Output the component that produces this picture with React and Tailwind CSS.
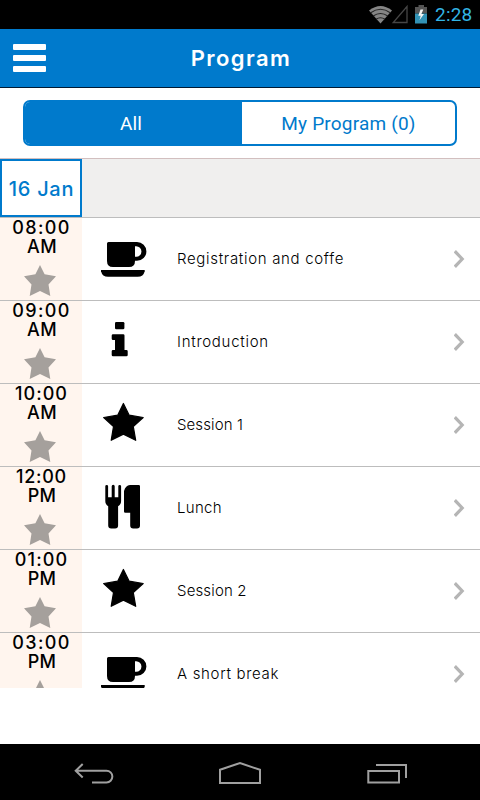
import React, { useState } from "react";

const sessions = [
  { time: "08:00", period: "AM", title: "Registration and coffe", icon: "cup", timeSpacing: "tracking-[1.4px]", spacing: "tracking-[0.68px]" },
  { time: "09:00", period: "AM", title: "Introduction", icon: "info", timeSpacing: "tracking-[1.4px]", spacing: "tracking-[0.72px]" },
  { time: "10:00", period: "AM", title: "Session 1", icon: "star", timeSpacing: "tracking-[1px]", spacing: "tracking-[0.1px]" },
  { time: "12:00", period: "PM", title: "Lunch", icon: "food", timeSpacing: "tracking-[0.7px]", spacing: "tracking-[0.3px]" },
  { time: "01:00", period: "PM", title: "Session 2", icon: "star", timeSpacing: "tracking-[1.1px]", spacing: "tracking-[0.15px]" },
  { time: "03:00", period: "PM", title: "A short break", icon: "cup", timeSpacing: "tracking-[1.4px]", spacing: "tracking-[0.68px]" },
];

function SessionIcon({ name }) {
  return (
    <svg className="w-12 h-12 shrink-0" viewBox="0 0 48 48" fill="currentColor">
      {name === "cup" && (
        <>
          <path fillRule="evenodd" d="M8.5 7H37a9.4 9.4 0 0 1 0 18.8H35V26q0 6-6 6H13q-6 0-6-6V8.5Q7 7 8.5 7ZM35 11.3V21.8h1.2a5.25 5.25 0 0 0 0-10.5Z" />
          <path d="M1 35h43.7v1.2q-1.3 5.5-7 5.5H8q-5.7 0-7-5.5Z" />
        </>
      )}
      {name === "info" && (
        <>
          <rect x="15" y="4" width="9.4" height="7.3" rx="1.3" />
          <path d="M13 16.3h10.2q1.3 0 1.3 1.3V32h1.9q1.3 0 1.3 1.3V37q0 1.3-1.3 1.3H13q-1.3 0-1.3-1.3v-3.7q0-1.3 1.3-1.3h2V22h-2q-1.3 0-1.3-1.3v-3.1q0-1.3 1.3-1.3Z" />
        </>
      )}
      {name === "star" && (
        <path
          d="M23.4 2.5 29.2 14.2 43.2 16.5 33.3 25.5 35.7 39.3 23.4 33.1 11.2 39.3 13.5 25.5 3.7 16.5 17.7 14.2Z"
          stroke="currentColor"
          strokeWidth="1.2"
          strokeLinejoin="round"
        />
      )}
      {name === "food" && (
        <>
          <path d="M5.3 2.3a1.4 1.4 0 0 1 2.8 0V13.3h3.6V2.3a1.5 1.5 0 0 1 3 0V13.3h3.6V2.3a1.4 1.4 0 0 1 2.8 0V17q0 3.5-3 5.3V41.5q0 3-3 3H11.2q-3 0-3-3V22.3q-2.9-1.8-2.9-5.3Z" />
          <path d="M30 1H38.7q1.3 0 1.3 1.3V41.5q0 3-3 3H33.2q-3 0-3-3V28.8H25.3q-1.3 0-1.3-1.3V7Q25.5 1.5 30 1Z" />
        </>
      )}
    </svg>
  );
}

function StatusBar() {
  return (
    <div className="flex h-[29px] shrink-0 items-center justify-end bg-black pr-2">
      <svg className="h-[29px] w-[60px]" viewBox="368 0 60 29" fill="none">
        <path d="M369 10.5Q380.5 1.5 392 10.5L380.5 23.5Z" fill="#858585" />
        <path d="M370.7 12.8q9.8-7 19.6 0M373.2 16q7.3-5 14.6 0M376 19.2q4.5-3 9 0" stroke="#222" strokeWidth="1.1" />
        <path d="M407 6.5V22.5H393.2Z" stroke="#464646" strokeWidth="1.3" />
        <path d="M418.5 5h5.5v2h3v6.5h-12V7h3.5Z" fill="#555" />
        <path d="M415 13.5h12V23.5h-12Z" fill="#3292b5" />
        <path d="m420.5 9.5-2.2 6.2h2.4l-1.2 4.6 4.5-6.2h-2.6l1.9-4.6Z" fill="#f4f4f4" />
      </svg>
      <span className="ml-[7px] w-[37px] whitespace-nowrap pt-px font-['Roboto'] text-[19px] leading-[30px] tracking-[0.2px] text-[#33b5e5]">2:28</span>
    </div>
  );
}

function SessionRow({ session }) {
  return (
    <div className="flex h-[83px] shrink-0 border-t border-[#bdbdbd]">
      <div className="flex w-[82px] shrink-0 flex-col items-center bg-[#fff5ee] text-[18px] font-medium leading-[19px]">
        <span className={`pl-px ${session.timeSpacing}`}>{session.time}</span>
        <span className="pl-[2px] tracking-[0.3px]">{session.period}</span>
        <svg className="mt-[9px] mr-[2px] h-8 w-8" viewBox="0 0 32 32" fill="#a5a09c">
          <path d="M16 0 20.6 9.2 32 11.3 24.5 19.5 26.3 31 16 26 5.7 31 7.5 19.5 0 11.3 11.4 9.2Z" />
        </svg>
      </div>
      <div className="flex flex-1 items-center pl-[18px] pr-[15px]">
        <SessionIcon name={session.icon} />
        <span className={`ml-[29px] flex-1 text-[15px] font-light leading-5 ${session.spacing}`}>{session.title}</span>
        <svg className="h-[18px] w-[11px]" viewBox="0 0 11 18" fill="none" stroke="#b5b5b5" strokeWidth="3.2">
          <path d="m.8 1.2 7.4 7.8-7.4 7.8" />
        </svg>
      </div>
    </div>
  );
}

function NavigationBar() {
  return (
    <div className="flex h-14 shrink-0 items-center gap-[104px] bg-black pl-[74px]">
      <svg className="h-7 w-10" viewBox="74 758 40 28" fill="none" stroke="#a0a0a0" strokeWidth="2">
        <path d="m82.7 764-7 6.7 7 6.8M76 770.7h30.5a5.85 5.85 0 0 1 0 11.7H92" />
      </svg>
      <svg className="h-7 w-11" viewBox="218 758 44 28" fill="none" stroke="#a0a0a0" strokeWidth="2">
        <path d="M220 769.8 240 763l20 6.8V783h-40Z" />
      </svg>
      <svg className="h-7 w-[42px]" viewBox="366 758 42 28" fill="none" stroke="#a0a0a0" strokeWidth="2">
        <path d="M368.3 771h30.7v11.5h-30.7ZM376 765h30v13" />
      </svg>
    </div>
  );
}

function App() {
  const [tab, setTab] = useState("all");

  return (
    <div className="flex h-[800px] w-[480px] flex-col overflow-hidden bg-white font-['Inter',sans-serif] text-black">
      <StatusBar />

      {/* Header */}
      <header className="grid h-[59px] shrink-0 grid-cols-[1fr_auto_1fr] items-center border-b border-[#001a33] bg-[#007acc] pl-[13px] text-white">
        <button className="flex w-[33px] flex-col gap-[5px]" aria-label="Menu">
          <span className="h-[6px] w-full rounded-[1px] bg-white" />
          <span className="h-[6px] w-full rounded-[1px] bg-white" />
          <span className="h-[6px] w-full rounded-[1px] bg-white" />
        </button>
        <h1 className="pr-[11px] text-[22px] font-semibold leading-7 tracking-[1.45px]">Program</h1>
      </header>

      {/* Tabs */}
      <div className="h-[70px] shrink-0 px-[23px] pt-3">
        <div className="flex h-[46px] overflow-hidden rounded-[7px] border-2 border-[#007acc] font-['Roboto'] text-[19px] tracking-[0.2px]">
          <button
            onClick={() => setTab("all")}
            className={`w-[217px] pr-[5px] pt-[3px] ${tab === "all" ? "bg-[#007acc] text-white" : "text-[#007acc]"}`}
          >
            All
          </button>
          <button
            onClick={() => setTab("mine")}
            className={`flex-1 pt-[3px] ${tab === "mine" ? "bg-[#007acc] text-white" : "text-[#007acc]"}`}
          >
            My Program (0)
          </button>
        </div>
      </div>

      {/* Dates */}
      <div className="flex h-[59px] shrink-0 border-t border-[#d2bfbf] bg-[#f0efee]">
        <button className="w-[82px] whitespace-nowrap border-2 border-[#007acc] bg-white pl-px pt-[2px] text-[20px] font-medium tracking-[0.7px] text-[#007acc]">
          16 Jan
        </button>
      </div>

      <div className="flex h-[471px] shrink-0 flex-col overflow-hidden">
        {sessions.map((session) => (
          <SessionRow key={session.time} session={session} />
        ))}
      </div>

      <div className="flex-1" />
      <NavigationBar />
    </div>
  );
}

export default App;
